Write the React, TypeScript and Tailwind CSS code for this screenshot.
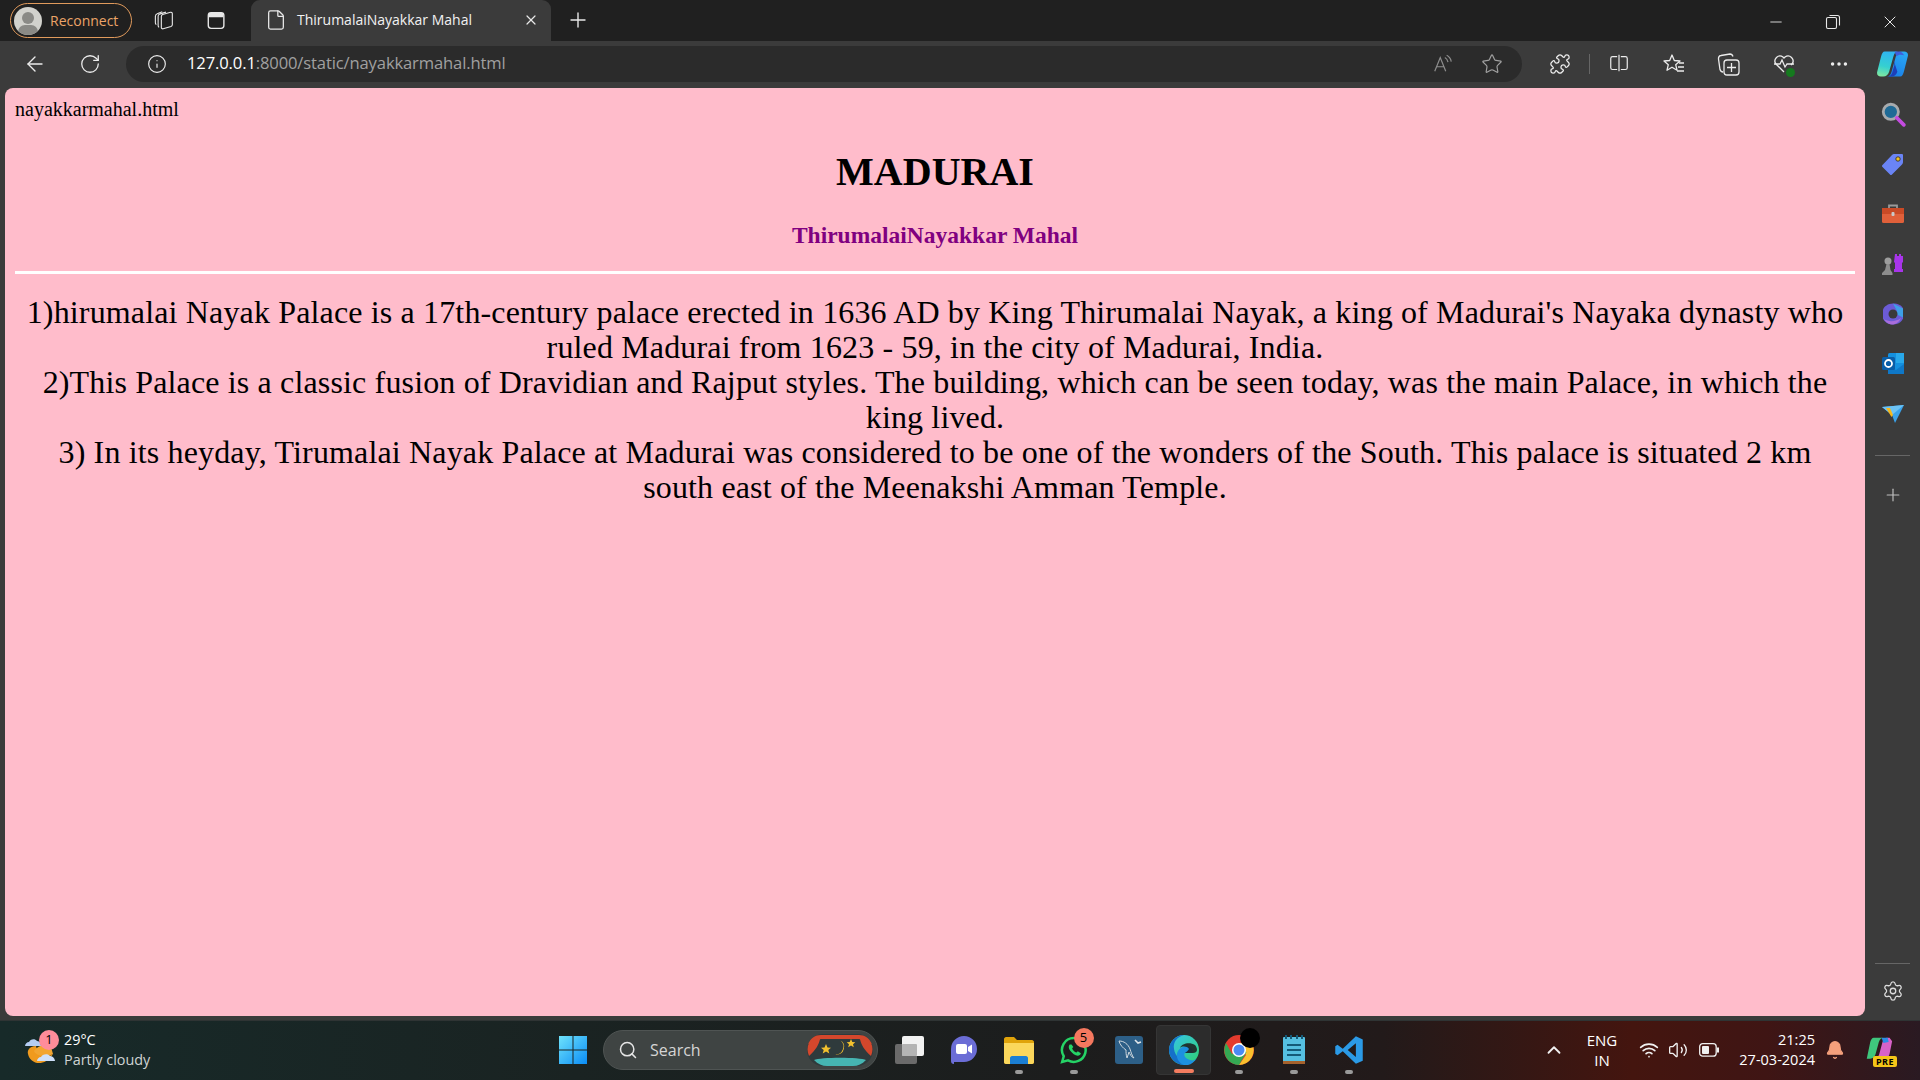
import React from "react";
import { ArrowLeft, RotateCw, Info, Star, Plus, X, Minus, Settings, Search, ChevronUp, Wifi, Volume2, Bell, MoreHorizontal, Puzzle, File } from "lucide-react";

const S = ({ w = 24, h = 24, vb = "0 0 24 24", children }: { w?: number; h?: number; vb?: string; children: React.ReactNode }) => (
  <svg width={w} height={h} viewBox={vb} fill="none">{children}</svg>
);

const COP = "M8 1H22C19 1 18 3 17 6L12.500 22C11.500 25 9.500 27 6.500 27H4C1 27 -.5 25 .2 22L4 7C5 3 6 1 8 1Z";

const Copilot = () => (
  <S w={31} h={28} vb="0 0 32 28">
    <defs>
      <linearGradient id="cpa" x1="0.500" y1="0" x2="0.300" y2="1"><stop offset="0" stopColor="#2fb5f2" /><stop offset="0.600" stopColor="#35d0d0" /><stop offset="1" stopColor="#7fe8a0" /></linearGradient>
      <linearGradient id="cpb" x1="0.300" y1="1" x2="0.700" y2="0"><stop offset="0" stopColor="#2aa8f5" /><stop offset="1" stopColor="#1a7fe8" /></linearGradient>
    </defs>
    <path d={COP} fill="url(#cpa)" />
    <path d={COP} fill="url(#cpb)" transform="rotate(180 16 14)" />
    <path d="M16.500 8L21 22C20 25 18 27 15 27H12C14.500 26 15.500 24 16 22L18 15z" fill="#1d3fb8" />
    <path d="M18 1h5c2 0 4 2 5 4-3-1-6-1-8 1z" fill="#3f5fdc" />
  </S>
);

const SideIcons = [
  <S key="s" w={26} h={26}>
    <circle cx="10" cy="10" r="7" fill="#1f6a96" stroke="#a7aaad" strokeWidth="2.6" />
    <path d="M15.500 15.500L22 22" stroke="#c44be0" strokeWidth="3.4" strokeLinecap="round" />
  </S>,
  <S key="t" w={24} h={24}>
    <path d="M13 2h8c1 0 1 1 1 1v7c0 1-.5 2-1 2.500L11 22.500c-.7.700-1.500.700-2 0L1.500 15c-.7-.7-.7-1.500 0-2L11 3c.7-.7 1.300-1 2-1z" fill="#6a84f5" />
    <circle cx="17" cy="7" r="2.200" fill="#f4c21d" stroke="#3a3a3a" />
  </S>,
  <S key="b" w={24} h={24}>
    <path d="M8 6V3.500h8V6" stroke="#9a9a9a" strokeWidth="1.800" />
    <rect x="1" y="6" width="22" height="15" rx="1.500" fill="#e0603a" />
    <rect x="1" y="6" width="22" height="6" fill="#c94a26" />
    <rect x="10.500" y="10" width="3" height="4" rx="1" fill="#c9c9c9" />
  </S>,
  <S key="c" w={24} h={24}>
    <path d="M14 2h2v2h2V2h2v2h2V2v8l-1 1v6h1v3h-9v-3h1v-6l-1-1z" fill="#a835ea" />
    <circle cx="7" cy="9" r="3.500" fill="#9d9d9d" />
    <path d="M5.500 12h3l1 6 2 3v2H1v-2l3-3z" fill="#8d8d8d" />
  </S>,
  <S key="m" w={24} h={24}>
    <path d="M12 1.500c5 0 9 2 10 5v10c-1 3-5 6-10 6s-9-3-10-6v-9c1-3 5-6 10-6z" fill="#6b5bd6" />
    <path d="M12 1.500l10 5v9l-6-3V9z" fill="#3ea0e6" />
    <path d="M3 17c4 3 12 3 17-1-2 5-7 7-10 6.500-3-.5-6-3-7-5.500z" fill="#a96ddb" />
    <circle cx="12" cy="12" r="4.500" fill="#3a3a3a" />
  </S>,
  <S key="o" w={24} h={24}>
    <rect x="7" y="1" width="16" height="21" rx="1.500" fill="#1490df" />
    <rect x="15" y="1" width="8" height="10" fill="#28a8ea" />
    <path d="M7 13l8 5 8-6v10H7z" fill="#0f78c8" />
    <rect x="1" y="5" width="13" height="13" rx="1.500" fill="#0a5ea8" />
    <circle cx="7.500" cy="11.500" r="3.500" fill="none" stroke="#fff" strokeWidth="1.800" />
  </S>,
  <S key="p" w={24} h={24}>
    <path d="M1 5l22-2-9 18-3-8z" fill="#3aa3ec" />
    <path d="M1 5l10 8 12-10z" fill="#6cc3f5" />
    <path d="M5 6l5.500 9 1.500-2-3-7z" fill="#f5b81d" />
  </S>,
];

const TabActionIcon = () => (
  <S w={22} h={22}>
    <rect x="2.500" y="3" width="17" height="17" rx="3" stroke="#e8e8e8" strokeWidth="1.500" />
    <path d="M3 5.500c0-1.500 1-2.500 2.500-2.500h11c1.500 0 2.500 1 2.500 2.500V8H3z" fill="#e8e8e8" />
  </S>
);
const CollectionsIcon = () => (
  <S w={22} h={22}>
    <path d="M8 7C8 6 8.500 5.500 9.500 5L18 2.500C19 2.300 20 3 20 4V16C20 17 19.500 17.500 18.500 18L10 20.500C9 20.800 8 20 8 19z" stroke="#e8e8e8" strokeWidth="1.200" />
    <path d="M5.500 19C4.800 18.500 4.500 18 4.500 17V7C4.500 5.800 5 5 6 4.500L13 2.300" stroke="#e8e8e8" strokeWidth="1.200" />
    <path d="M2.500 16C2 15.500 1.500 15 1.500 14V7C1.500 5.500 2 4.500 3.500 4L9 2" stroke="#e8e8e8" strokeWidth="1.200" />
  </S>
);

const TaskBtn = ({ dot, active, children }: { dot?: boolean; active?: boolean; children: React.ReactNode }) => (
  <div className={`relative flex h-[50px] w-[55px] items-center justify-center rounded-[4px] ${active ? "border border-[#353535] bg-[#2c2c2c]" : ""}`}>
    {children}
    {dot && <span className="absolute bottom-[1px] h-[4px] w-[8px] rounded-full bg-[#9a9a9a]" />}
    {active && <span className="absolute bottom-[1px] h-[4px] w-[20px] rounded-full bg-[#f47c5f]" />}
  </div>
);

export default function App() {
  return (
    <div className="flex h-[1080px] w-[1920px] flex-col overflow-hidden bg-[#3b3b3b] font-['Open_Sans',sans-serif]">
      {/* Title bar */}
      <div className="flex h-[41px] items-end bg-[#202020]">
        <div className="mb-[3px] ml-[10px] flex h-[35px] w-[122px] items-center gap-[8px] rounded-full border border-[#e09a5c] pl-[3px]">
          <span className="relative h-[28px] w-[28px] overflow-hidden rounded-full bg-[#d2d2cd]">
            <span className="absolute left-[8px] top-[5px] h-[12px] w-[12px] rounded-full bg-[#8a8a86]" />
            <span className="absolute left-[4px] top-[18px] h-[14px] w-[20px] rounded-full bg-[#8a8a86]" />
          </span>
          <span className="text-[14px] text-[#eba468]">Reconnect</span>
        </div>
        <div className="mb-[9px] ml-[22px] flex w-[22px]"><CollectionsIcon /></div>
        <div className="mb-[9px] ml-[30px] flex w-[22px]"><TabActionIcon /></div>
        <div className="ml-[23px] flex h-[41px] w-[300px] items-center rounded-t-[9px] bg-[#3b3b3b] pb-[2px] pl-[14px] pr-[12px]">
          <File size={22} color="#e8e8e8" strokeWidth={1.4} />
          <span className="ml-[10px] flex-1 text-[14px] text-[#f2f2f2]">ThirumalaiNayakkar Mahal</span>
          <X size={16} color="#e8e8e8" strokeWidth={1.8} />
        </div>
        <div className="mb-[9px] ml-[15px]"><Plus size={24} color="#e8e8e8" strokeWidth={1.4} /></div>
        <div className="ml-auto mb-[9px] flex items-center pr-[1px]">
          <div className="flex w-[57px] justify-center"><Minus size={18} color="#e8e8e8" strokeWidth={1.2} /></div>
          <div className="flex w-[57px] justify-center">
            <S w={16} h={16} vb="0 0 16 16">
              <rect x="1.500" y="3.500" width="10" height="11" rx="1.500" stroke="#e8e8e8" strokeWidth="1.100" />
              <path d="M4.500 1.500h8c1.200 0 2 .8 2 2v8" stroke="#e8e8e8" strokeWidth="1.100" />
            </S>
          </div>
          <div className="flex w-[58px] justify-center"><X size={20} color="#e8e8e8" strokeWidth={1.2} /></div>
        </div>
      </div>

      {/* Toolbar */}
      <div className="flex h-[47px] items-center bg-[#3b3b3b] pb-[2px]">
        <div className="ml-[23px] flex w-[24px]"><ArrowLeft size={24} color="#ececec" strokeWidth={1.4} /></div>
        <div className="ml-[32px] flex w-[24px]"><RotateCw size={22} color="#ececec" strokeWidth={1.4} /></div>
        <div className="ml-[23px] flex h-[36px] w-[1396px] items-center rounded-full bg-[#2b2b2b] pl-[21px] pr-[19px]">
          <Info size={20} color="#ececec" strokeWidth={1.4} />
          <span className="ml-[20px] flex-1 text-[16.6px] tracking-[-0.14px] text-[#a0a0a0]"><span className="text-white">127.0.0.1</span>:8000/static/nayakkarmahal.html</span>
          <span className="mr-[27px] flex items-center text-[#8e8e8e]">
            <S w={22} h={22}>
              <path d="M3 20L9 5l6 15M5.500 15h7" stroke="#8e8e8e" strokeWidth="1.300" />
              <path d="M14 5c2 1 3 3 3.500 5M16 2.500c3 1.500 4.500 4 5 7" stroke="#8e8e8e" strokeWidth="1.300" />
            </S>
          </span>
          <Star size={22} color="#a0a0a0" strokeWidth={1.3} />
        </div>
        <div className="ml-[26px] flex w-[24px] justify-center"><Puzzle size={22} color="#ececec" strokeWidth={1.4} /></div>
        <div className="ml-[17px] h-[20px] w-[1px] bg-[#666]" />
        <div className="ml-[17px] flex w-[24px] justify-center">
          <S w={22} h={22}>
            <path d="M10 4H5a2 2 0 00-2 2v10a2 2 0 002 2h5M14 4h5a2 2 0 012 2v10a2 2 0 01-2 2h-5M12 2v18" stroke="#ececec" strokeWidth="1.300" />
          </S>
        </div>
        <div className="ml-[31px] flex w-[24px] justify-center">
          <S w={24} h={24}>
            <path d="M10 3l2.300 5.500 5.700.5-4.300 3.700 1.300 5.500-5-3-5 3 1.300-5.500L2 9l5.700-.5z" stroke="#ececec" strokeWidth="1.300" strokeLinejoin="round" />
            <path d="M17 11h5M16 15h6M15 19h7" stroke="#ececec" strokeWidth="1.300" />
          </S>
        </div>
        <div className="ml-[31px] flex w-[24px] justify-center">
          <S w={24} h={24}>
            <path d="M6 20c-1.500 0-2.500-1-3-2.500L1.500 7C1.300 5 2.500 3.500 4 3.500L13 2c1.500 0 2.500 1 3 2.500" stroke="#ececec" strokeWidth="1.300" />
            <rect x="7" y="8" width="15" height="15" rx="3" stroke="#ececec" strokeWidth="1.300" />
            <path d="M14.500 11v9M10 15.500h9" stroke="#ececec" strokeWidth="1.300" />
          </S>
        </div>
        <div className="relative ml-[31px] flex w-[24px] justify-center">
          <S w={24} h={24}>
            <path d="M12 20L4 12a5 5 0 017-7l1 1 1-1a5 5 0 017 7l-1 1" stroke="#ececec" strokeWidth="1.300" />
            <path d="M2 12h6l2-4 3 7 2-3h7" stroke="#ececec" strokeWidth="1.300" />
          </S>
          <span className="absolute bottom-[-1px] right-[1px] h-[9px] w-[9px] rounded-full bg-[#157a1e]" />
        </div>
        <div className="ml-[31px] flex w-[24px] justify-center"><MoreHorizontal size={22} color="#ececec" strokeWidth={1.8} /></div>
        <div className="ml-[25px] flex w-[32px] justify-center"><Copilot /></div>
      </div>

      {/* Middle */}
      <div className="flex h-[932px]">
        <div className="ml-[5px] h-[928px] w-[1860px] rounded-[8px] bg-[#ffbccb] px-[10px] font-['Liberation_Serif',serif] text-black">
          <div className="pt-[9px] text-[20px] leading-[24px]">nayakkarmahal.html</div>
          <h1 className="mt-[28px] text-center text-[40px] font-bold leading-[46px]">MADURAI</h1>
          <h3 className="mt-[27px] text-center text-[23.5px] font-bold leading-[27px] text-[#800080]">ThirumalaiNayakkar Mahal</h3>
          <div className="mt-[22px] h-[3px] bg-white" />
          <p className="mt-[21px] px-[7px] text-center text-[32px] leading-[35px] tracking-[0.15px]">
            1)hirumalai Nayak Palace is a 17th-century palace erected in 1636 AD by King Thirumalai Nayak, a king of Madurai's Nayaka dynasty who ruled Madurai from 1623 - 59, in the city of Madurai, India.<br />
            2)This Palace is a classic fusion of Dravidian and Rajput styles. The building, which can be seen today, was the main Palace, in which the king lived.<br />
            3) In its heyday, Tirumalai Nayak Palace at Madurai was considered to be one of the wonders of the South. This palace is situated 2 km south east of the Meenakshi Amman Temple.
          </p>
        </div>
        <div className="flex w-[55px] flex-col items-center pb-[18px] pt-[1px]">
          {SideIcons.map((ic, i) => (
            <div key={i} className="flex h-[50px] w-full items-center justify-center">{ic}</div>
          ))}
          <div className="mt-[16px] h-[1px] w-[35px] bg-[#666]" />
          <div className="mt-[29px]"><Plus size={20} color="#c0c0c0" strokeWidth={1.4} /></div>
          <div className="mt-auto h-[1px] w-[35px] bg-[#666]" />
          <div className="mt-[16px]"><Settings size={22} color="#dcdcdc" strokeWidth={1.4} /></div>
        </div>
      </div>

      {/* Taskbar */}
      <div className="flex h-[60px] items-center border-t border-[#2f3434] bg-[linear-gradient(90deg,#172a29_0%,#1a2322_30%,#1c1d1d_55%,#221a1a_72%,#44150f_85%,#3f1514_92%,#2a1a22_100%)] pb-[2px] text-white">
        <div className="flex w-[547px] items-center pl-[24px]">
          <div className="relative h-[36px] w-[32px]">
            <S w={34} h={36} vb="0 0 34 36">
              <path d="M4 22C6 32 20 36 29 22C24 26 14 24 12 14C6 14 3 18 4 22z" fill="#f09a1e" />
              <path d="M10 19C12 24 22 26 29 22L27 15C21 12 14 13 10 19z" fill="#f2a531" />
              <path d="M1 14c0-2 2-4 4-4 1-3 6-4 8-1 3 0 4 3 4 5z" fill="#b5cdf2" />
              <path d="M13 29c0-2 2-4 4-4 1-3 7-4 9-1 3 0 5 3 5 5z" fill="#cfe0fa" />
            </S>
            <span className="absolute left-[15px] top-[-2px] flex h-[20px] w-[20px] items-center justify-center rounded-full bg-[#ff8c9a] text-[13px] text-black">1</span>
          </div>
          <div className="ml-[8px] flex flex-col text-[14.4px] leading-[20px]">
            <span>29°C</span>
            <span className="text-[#cfd3d3]">Partly cloudy</span>
          </div>
        </div>
        <div className="flex w-[44px] justify-start pl-[11px]">
          <S w={30} h={30} vb="0 0 30 30">
            <defs>
              <linearGradient id="wn" x1="0" y1="0" x2="1" y2="1"><stop offset="0" stopColor="#6fe3fb" /><stop offset="1" stopColor="#0a8cf5" /></linearGradient>
            </defs>
            <path d="M1 1h13.500v13.500H1zM15.500 1H29v13.500H15.500zM1 15.500h13.500V29H1zM15.500 15.500H29V29H15.500z" fill="url(#wn)" />
          </S>
        </div>
        <div className="ml-[12px] flex h-[40px] w-[275px] items-center rounded-full border border-[#4f5453] bg-[#3f4443] pl-[14px] pr-[4px]">
          <Search size={20} color="#e6e6e6" strokeWidth={1.8} />
          <span className="ml-[12px] flex-1 text-[16px] text-[#d5d5d5]">Search</span>
          <div className="h-[32px] w-[66px]">
            <S w={66} h={32} vb="0 0 66 32">
              <rect x="0" y="0" width="66" height="32" rx="16" fill="#2f3a3c" />
              <path d="M14 1h38c6 0 10 3 13 9-4-2-8-4-13-5H14C9 6 5 8 1 10c3-6 7-9 13-9z" fill="#d4472c" />
              <path d="M2 9c4-4 8-5 11-4-1 5-4 11-11 17-2-5-2-9 0-13zM64 9c-4-4-8-5-11-4 1 5 4 11 11 17 2-5 2-9 0-13z" fill="#d4472c" />
              <path d="M7 26c6-3 46-3 52 0-4 4-8 6-13 6H20c-5 0-9-2-13-6z" fill="#46b5b2" />
              <path d="M31 7a8 8 0 010 15 7 7 0 006-8 7 7 0 00-6-7z" fill="#f2c12e" transform="rotate(20 34 14)" />
              <path d="M19 10l1.500 3.500 3.500.3-2.700 2.200 1 3.500-3.300-2-3.300 2 1-3.500L14 13.800l3.500-.3zM44 5l1.300 3 3 .3-2.300 2 .8 3-2.800-1.700-2.800 1.700.8-3-2.300-2 3-.3z" fill="#f2c12e" />
            </S>
          </div>
        </div>
        <div className="ml-[3px] flex">
          <TaskBtn>
            <S w={30} h={28} vb="0 0 30 28">
              <rect x="1" y="8" width="22" height="20" rx="2" fill="#6a6a6a" />
              <rect x="8" y="0" width="22" height="20" rx="2" fill="#f2f2f2" />
              <rect x="8" y="8" width="15" height="12" rx="1" fill="#b4b4b4" />
            </S>
          </TaskBtn>
          <TaskBtn>
            <S w={30} h={30} vb="0 0 30 30">
              <path d="M15 1a13 13 0 0 1 0 26H5v2c-2 0-3-1-3-3V14A13 13 0 0 1 15 1z" fill="#6b6dd6" />
              <rect x="7" y="9" width="11" height="10" rx="2" fill="#fff" />
              <path d="M19 12l4-2.500v9L19 16z" fill="#fff" />
            </S>
          </TaskBtn>
          <TaskBtn dot>
            <S w={30} h={28} vb="0 0 30 28">
              <path d="M0 3c0-1 1-2 2-2h8l3 3h15c1 0 2 1 2 2v20c0 1-1 2-2 2H2c-1 0-2-1-2-2z" fill="#e0a30a" />
              <path d="M0 7h30v19c0 1-1 2-2 2H2c-1 0-2-1-2-2z" fill="#fbd75c" />
              <path d="M6 22c0-1 1-2 2-2h14c1 0 2 1 2 2v6H6z" fill="#1b7fd4" />
            </S>
          </TaskBtn>
          <TaskBtn dot>
            <div className="relative">
              <S w={30} h={30} vb="0 0 24 24">
                <path d="M12 2.500A9.500 9.500 0 0 0 3.800 17L2.500 21.500l4.700-1.200A9.500 9.500 0 1 0 12 2.500z" stroke="#25d366" strokeWidth="2" />
                <path d="M8.500 7.500c-1 1-1 3 .5 5s4 4 6 4c1 0 2.500-1 2.500-2l-2.500-1.500-1 1c-1.500-.5-3-2-3.500-3.500l1-1L10 7.500z" fill="#25d366" />
              </S>
              <span className="absolute right-[-5px] top-[-7px] flex h-[20px] w-[20px] items-center justify-center rounded-full bg-[#f5785f] text-[13px] text-black">5</span>
            </div>
          </TaskBtn>
          <TaskBtn>
            <S w={30} h={30} vb="0 0 30 30">
              <rect x="1" y="1" width="28" height="28" rx="3" fill="#2d5f87" />
              <path d="M5 6c5 0 9 3 11 8 1 3 2 7 4 9-3-1-4-4-5-6l-2 6c-1-3-1-6-1-8-3-2-6-5-7-9z" stroke="#cfd8de" strokeWidth="1" />
              <path d="M21 5l3 3 3-1" stroke="#e0e6ea" strokeWidth="1.600" />
            </S>
          </TaskBtn>
          <TaskBtn active>
            <S w={30} h={30} vb="0 0 30 30">
              <defs>
                <linearGradient id="eg" x1="0" y1="0" x2="1" y2="1"><stop offset="0" stopColor="#37c4ee" /><stop offset="1" stopColor="#2fd06f" /></linearGradient>
              </defs>
              <circle cx="15" cy="15" r="15" fill="url(#eg)" />
              <path d="M0 15C0 7 7 0 15 0 7 2 4 8 5 14c1 8 9 14 18 13-3 2-5 3-8 3C7 30 0 23 0 15z" fill="#1570c9" />
              <path d="M15 30c-6-2-9-9-6-14 2-4 8-6 13-3 3 2 2 5 0 5H16c-2 2 0 6 5 7 3 1 5 0 7-2-3 5-8 8-13 7z" fill="#1d90e0" />
              <path d="M16 18h8c2 0 4-1 4-3 0-2-1-4-2-5-5-3-13-2-15 3 2-2 7-2 9 1-1 2-3 3-4 4z" fill="#1e2322" opacity="0.9" />
            </S>
          </TaskBtn>
          <TaskBtn dot>
            <div className="relative">
              <S w={30} h={30} vb="0 0 30 30">
                <circle cx="15" cy="15" r="15" fill="#e33b2e" />
                <path d="M15 30a15 15 0 0 0 13-22H15l7 12z" fill="#fbc02d" />
                <path d="M15 30L22.500 17 15 15 8 19 2 8A15 15 0 0 0 15 30z" fill="#34a853" />
                <circle cx="15" cy="15" r="7" fill="#fff" />
                <circle cx="15" cy="15" r="5.500" fill="#4a8af4" />
              </S>
              <span className="absolute right-[-6px] top-[-7px] h-[20px] w-[20px] rounded-full bg-black" />
            </div>
          </TaskBtn>
          <TaskBtn dot>
            <S w={24} h={30} vb="0 0 24 30">
              <rect x="1" y="2" width="22" height="27" rx="1" fill="#55bfe0" />
              <rect x="1" y="26" width="22" height="3" fill="#a5622d" />
              <path d="M5 10h14M5 15h14M5 20h14" stroke="#145a78" strokeWidth="2" />
              <path d="M4 0v4M9 0v4M15 0v4M20 0v4" stroke="#145a78" strokeWidth="2" />
            </S>
          </TaskBtn>
          <TaskBtn dot>
            <S w={30} h={30} vb="0 0 24 24">
              <path d="M17.500 1L7 11 2.800 7.800 1 9v6l1.800 1.200L7 13l10.500 10 5.500-2.500V3.500zM17.500 6.500v11L11 12z" fill="#2b9ae6" />
            </S>
          </TaskBtn>
        </div>
        <div className="ml-auto flex items-center pr-[26px]">
          <ChevronUp size={22} color="#f0f0f0" strokeWidth={2} />
          <div className="ml-[20px] flex w-[34px] flex-col items-center text-[15px] leading-[20px]">
            <span>ENG</span><span>IN</span>
          </div>
          <div className="ml-[20px]"><Wifi size={20} color="#f0f0f0" strokeWidth={2} /></div>
          <div className="ml-[9px]"><Volume2 size={20} color="#f0f0f0" strokeWidth={1.6} /></div>
          <div className="ml-[11px]">
            <S w={20} h={14} vb="0 0 20 14">
              <rect x="0.700" y="0.700" width="16.500" height="12.500" rx="3" stroke="#f0f0f0" strokeWidth="1.300" />
              <rect x="3" y="3" width="7" height="8" rx="1" fill="#f0f0f0" />
              <rect x="18" y="4.500" width="2" height="5" fill="#f0f0f0" />
            </S>
          </div>
          <div className="ml-[18px] flex w-[78px] flex-col items-end text-[14.5px] leading-[20px]">
            <span>21:25</span><span>27-03-2024</span>
          </div>
          <div className="ml-[10px]"><Bell size={20} color="#f5a07c" fill="#f5a07c" strokeWidth={1.5} /></div>
          <div className="relative ml-[19px] h-[30px] w-[30px]">
            <S w={30} h={28} vb="0 0 32 32">
              <path d="M10 3h10c-3 1-4 4-5 8l-3 11c-1 3-3 5-6 5H2L6 8c1-3 2-5 4-5z" fill="#3fc67d" />
              <path d="M22 27H12c3-1 4-4 5-8l3-11c1-3 3-5 5-5h3l3 4-3 15c-1 3-3 5-6 5z" fill="#d862c8" />
              <path d="M19 3h7l1 5-6 1z" fill="#2b8ce6" />
            </S>
            <span className="absolute bottom-[-2px] right-[-3px] flex h-[11px] w-[24px] items-center justify-center rounded-[2px] bg-[#f5c518] text-[9px] font-bold leading-none tracking-[0.5px] text-black">PRE</span>
          </div>
        </div>
      </div>
    </div>
  );
}
